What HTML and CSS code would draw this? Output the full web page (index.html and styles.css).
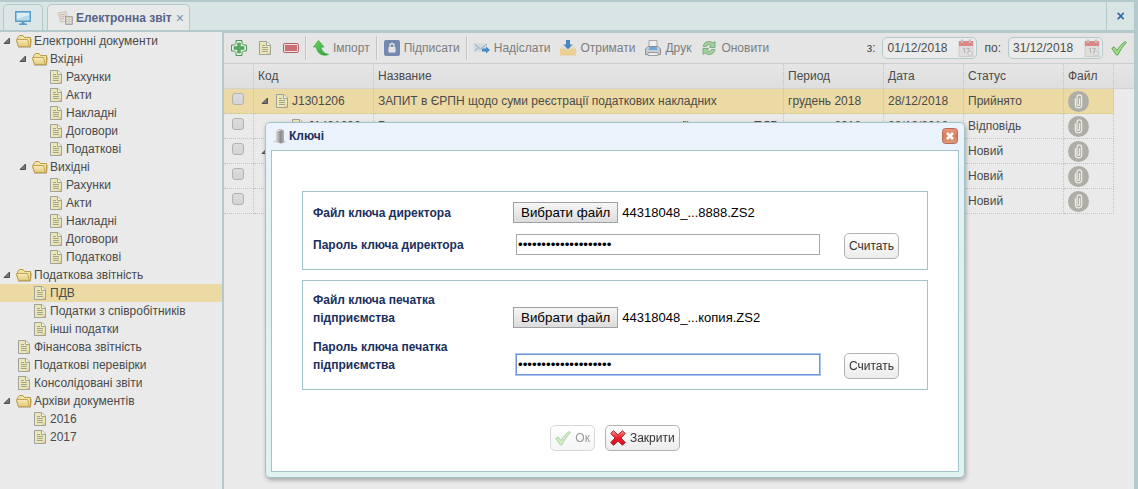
FILE: index.html
```
<!DOCTYPE html>
<html lang="uk">
<head>
    <meta charset="UTF-8">
    <meta name="viewport" content="width=device-width, initial-scale=1.0">
    <title>Електронна звіт</title>
    <link rel="stylesheet" href="styles.css">
</head>
<body>
    <!-- icon sprite -->
    <svg class="sprite">
        <defs>
            <linearGradient id="gFolder" x1="0" y1="0" x2="0" y2="1">
                <stop offset="0" stop-color="#f6eebc"/><stop offset="1" stop-color="#e2c878"/>
            </linearGradient>
            <linearGradient id="gRed" x1="0" y1="0" x2="0" y2="1">
                <stop offset="0" stop-color="#ff8f8f"/><stop offset="0.5" stop-color="#e81c24"/><stop offset="1" stop-color="#d80f18"/>
            </linearGradient>
            <linearGradient id="gClose" x1="0" y1="0" x2="0" y2="1">
                <stop offset="0" stop-color="#e59a80"/><stop offset="0.5" stop-color="#dd7a5c"/><stop offset="1" stop-color="#d3a27e"/>
            </linearGradient>
            <linearGradient id="gArrow" x1="0" y1="0" x2="1" y2="1">
                <stop offset="0" stop-color="#6fd45c"/><stop offset="1" stop-color="#27a03a"/>
            </linearGradient>
            <linearGradient id="gMetal" x1="0" y1="0" x2="1" y2="0">
                <stop offset="0" stop-color="#d8d8d8"/><stop offset="0.45" stop-color="#8c8c8c"/><stop offset="1" stop-color="#c9c9c9"/>
            </linearGradient>
        </defs>
        <symbol id="folder" viewBox="0 0 16 16">
            <path d="M2 14.500H14.500L15.500 6" fill="none" stroke="#c2bfae"/>
            <path d="M1.500 5L3.500 2.500H7L8.500 4.500H14.500V13.500H2.500L.5 7.500H1.500Z" fill="#efe4a8" stroke="#bd9a45"/>
            <path d="M.5 6.500H11.500L13.500 13.500H2.500Z" fill="url(#gFolder)" stroke="#c5a250"/>
        </symbol>
        <symbol id="doc" viewBox="0 0 16 16">
            <path d="M2.500 1.500H10L13.500 5V14.500H2.500Z" fill="#ebe8b4" stroke="#a0a09c"/>
            <path d="M9.500 1.500V5.500H13.500" fill="#f5f5e8" stroke="#a0a09c"/>
            <path d="M5 5.500H8M5 7.500H11M5 9.500H11M5 11.500H11" stroke="#a3a294"/>
            <path d="M10 14L13 14V11Z" fill="#e8c8a0"/>
        </symbol>
        <symbol id="toggle" viewBox="0 0 8 8">
            <path d="M6.500 1V6.500H1Z" fill="#777" stroke="#4d4d4d"/>
        </symbol>
        <symbol id="screen" viewBox="0 0 16 16">
            <path d="M.7 1.700H15.300V11.300H.7Z" fill="#b4dcea" stroke="#5a9cc8" stroke-width="1.400"/>
            <path d="M2 3H14V5L2 9Z" fill="#d8eef4"/>
            <path d="M6.500 12H9.500V13.500H12V15H4V13.500H6.500Z" fill="#5a9cc8"/>
        </symbol>
        <symbol id="report" viewBox="0 0 16 16">
            <path d="M1 3L9 1.500L11 10L4 12.500Z" fill="#e2deda" stroke="#cbc4bd"/>
            <path d="M3 5L8 4M3.500 7L8.500 6M4 9L7 8.500" stroke="#dcb8ac"/>
            <path d="M8.500 6.500H15.500V14.500H8.500Z" fill="#c9c6c0" stroke="#aaa9a4"/>
            <path d="M10 8.500H14M10 10.500H14M10 12.500H14" stroke="#eee" stroke-dasharray="1 .5"/>
        </symbol>
        <symbol id="plus" viewBox="0 0 16 16">
            <path d="M5 .5H11V3.500L12.500 5H15.500V11H12.500L11 12.500V15.500H5V12.500L3.500 11H.5V5H3.500L5 3.500Z" fill="#e8efe6" stroke="#4d9660"/>
            <path d="M6.500 3H9.500V6.500H13V9.500H9.500V13H6.500V9.500H3V6.500H6.500Z" fill="#55a860" stroke="#4aa156" stroke-width=".6"/>
        </symbol>
        <symbol id="minus" viewBox="0 0 16 16">
            <rect x=".5" y="3.500" width="15" height="9" rx="1.500" fill="#f0dede" stroke="#b06468"/>
            <rect x="2" y="5" width="12" height="6" fill="#c87072"/>
        </symbol>
        <symbol id="import" viewBox="0 0 16 16">
            <path d="M5.500 .5L11 7H8C8.500 11 11 13.500 15.500 14.500C10 16.500 4 14 3.500 7H.5Z" fill="url(#gArrow)" stroke="#43a54a" stroke-width=".8"/>
        </symbol>
        <symbol id="lock" viewBox="0 0 16 16">
            <rect width="16" height="16" rx="2" fill="#7389b0"/>
            <path d="M6 7V5.500A2 2 0 0 1 10 5.500V7" fill="none" stroke="#e4e4e4" stroke-width="1.300"/>
            <rect x="4.500" y="7" width="7" height="5.500" rx=".5" fill="#e4e4e4"/>
        </symbol>
        <symbol id="mail" viewBox="0 0 16 16">
            <path d="M0 3.500H13V11.500H0Z" fill="#d2dae0"/>
            <path d="M.5 4L6.500 9L13 4M.5 11L4.500 7.500" fill="none" stroke="#96a8b6"/>
            <path d="M8 8.500H12V6.500L16 10L12 13.500V11.500H8Z" fill="#4b86c4"/>
        </symbol>
        <symbol id="inbox" viewBox="0 0 16 16">
            <path d="M2 4H14L16 9V14.500Q16 15.500 15 15.500H1Q0 15.500 0 14.500V9Z" fill="#dfe0d8"/>
            <path d="M0 8.500H5Q8 12 11 8.500H16V14.500Q16 15.500 15 15.500H1Q0 15.500 0 14.500Z" fill="#ebcf94"/>
            <path d="M6 0H10V4.500H12.500L8 9.500L3.500 4.500H6Z" fill="#4b86c4"/>
        </symbol>
        <symbol id="printer" viewBox="0 0 16 16">
            <path d="M4 .5H12V8H4Z" fill="#f0f0f0" stroke="#a5a5a5"/>
            <path d="M3 6.500H13L15.500 9V14.500H.5V9Z" fill="#c9ccd0" stroke="#8c9096"/>
            <path d="M4.500 7H11.500L12.500 10H3.500Z" fill="#69a8e0"/>
            <path d="M3 12.500H13V15.500H3Z" fill="#ededed" stroke="#9a9da2"/>
        </symbol>
        <symbol id="refresh" viewBox="0 0 16 16">
            <path d="M2 6.500C3 1 9 .5 12 3L14 1.500V7.500H8.500L10 5.500C8 4 6 4.500 5.500 6.500Z" fill="#a4cf9e" stroke="#6ba572" stroke-width=".8"/>
            <path d="M14 9.500C13 15 7 15.500 4 13L2 14.500V8.500H7.500L6 10.500C8 12 10 11.500 10.500 9.500Z" fill="#a4cf9e" stroke="#6ba572" stroke-width=".8"/>
        </symbol>
        <symbol id="check" viewBox="0 0 16 16">
            <path d="M.8 8.500L3 6.800L6 10.500C8.500 6.500 11 3.500 14.500 1.500L15.500 2.500C12 6 9 10.500 6.800 15H5.500Z" fill="#a5dd84" stroke="#55a558"/>
        </symbol>
        <symbol id="cross" viewBox="0 0 16 16">
            <path d="M3.500 .7L8 4.800L12.500 .7L15.300 3.500L11 8L15.300 12.500L12.500 15.300L8 11.200L3.500 15.300L.7 12.500L5 8L.7 3.500Z" fill="url(#gRed)" stroke="#b02830" stroke-linejoin="round"/>
        </symbol>
        <symbol id="calendar" viewBox="0 0 16 18">
            <rect x="1" y="2.500" width="14" height="15" fill="#dfdddd" stroke="#cfcccc"/>
            <path d="M1 2H15V7H1Z" fill="#dc8686"/>
            <path d="M4 .5V4M12 .5V4" stroke="#c4bcbc" stroke-width="2.400"/>
            <path d="M5 10L6.500 9V14M8.500 9.500H11.500L9.500 14" fill="none" stroke="#b5b3b3"/>
            <circle cx="12" cy="14.500" r="2" fill="#ececec" stroke="#c6c4c4"/>
        </symbol>
        <symbol id="clip" viewBox="0 0 20 20">
            <circle cx="10" cy="10" r="10" fill="#aeada6"/>
            <path d="M7 7V13A3 3 0 0 0 13 13V6A2.200 2.200 0 0 0 8.600 6V12.500A1.200 1.200 0 0 0 11 12.500V7" fill="none" stroke="#ebebe8" stroke-width="1.200"/>
        </symbol>
        <symbol id="tower" viewBox="0 0 16 16">
            <path d="M0 14L4 11V15Z" fill="#d4d4d4"/>
            <path d="M3 2.500L7 1L11 2.500V13L13 14L8 15.500L3 14Z" fill="url(#gMetal)"/>
            <path d="M4 3L8 2" stroke="#eee"/>
        </symbol>
        <symbol id="close" viewBox="0 0 16 16">
            <rect x=".5" y=".5" width="15" height="15" rx="3" fill="url(#gClose)" stroke="#b5695c"/>
            <path d="M5 5L11 11M11 5L5 11" stroke="#fff" stroke-width="2.600"/>
        </symbol>
    </svg>

    <div class="app">
        <header class="tabbar">
            <button class="tab tab-home" aria-label="Робочий стіл"><svg class="icon"><use href="#screen"/></svg></button>
            <div class="tab tab-active">
                <svg class="icon"><use href="#report"/></svg>
                <span>Електронна звіт</span>
                <button class="tab-close" aria-label="Закрити вкладку">×</button>
            </div>
            <button class="close-all" aria-label="Закрити все">×</button>
        </header>

        <div class="workspace">
            <nav class="sidebar">
                <ul class="tree">
                    <li><a href="#" class="node"><svg class="toggle"><use href="#toggle"/></svg><svg class="icon"><use href="#folder"/></svg>Електронні документи</a>
                        <ul>
                            <li><a href="#" class="node"><svg class="toggle"><use href="#toggle"/></svg><svg class="icon"><use href="#folder"/></svg>Вхідні</a>
                                <ul>
                                    <li><a href="#" class="node leaf"><svg class="icon"><use href="#doc"/></svg>Рахунки</a></li>
                                    <li><a href="#" class="node leaf"><svg class="icon"><use href="#doc"/></svg>Акти</a></li>
                                    <li><a href="#" class="node leaf"><svg class="icon"><use href="#doc"/></svg>Накладні</a></li>
                                    <li><a href="#" class="node leaf"><svg class="icon"><use href="#doc"/></svg>Договори</a></li>
                                    <li><a href="#" class="node leaf"><svg class="icon"><use href="#doc"/></svg>Податкові</a></li>
                                </ul>
                            </li>
                            <li><a href="#" class="node"><svg class="toggle"><use href="#toggle"/></svg><svg class="icon"><use href="#folder"/></svg>Вихідні</a>
                                <ul>
                                    <li><a href="#" class="node leaf"><svg class="icon"><use href="#doc"/></svg>Рахунки</a></li>
                                    <li><a href="#" class="node leaf"><svg class="icon"><use href="#doc"/></svg>Акти</a></li>
                                    <li><a href="#" class="node leaf"><svg class="icon"><use href="#doc"/></svg>Накладні</a></li>
                                    <li><a href="#" class="node leaf"><svg class="icon"><use href="#doc"/></svg>Договори</a></li>
                                    <li><a href="#" class="node leaf"><svg class="icon"><use href="#doc"/></svg>Податкові</a></li>
                                </ul>
                            </li>
                        </ul>
                    </li>
                    <li><a href="#" class="node"><svg class="toggle"><use href="#toggle"/></svg><svg class="icon"><use href="#folder"/></svg>Податкова звітність</a>
                        <ul>
                            <li><a href="#" class="node leaf selected"><svg class="icon"><use href="#doc"/></svg>ПДВ</a></li>
                            <li><a href="#" class="node leaf"><svg class="icon"><use href="#doc"/></svg>Податки з співробітників</a></li>
                            <li><a href="#" class="node leaf"><svg class="icon"><use href="#doc"/></svg>інші податки</a></li>
                        </ul>
                    </li>
                    <li><a href="#" class="node leaf"><svg class="icon"><use href="#doc"/></svg>Фінансова звітність</a></li>
                    <li><a href="#" class="node leaf"><svg class="icon"><use href="#doc"/></svg>Податкові перевірки</a></li>
                    <li><a href="#" class="node leaf"><svg class="icon"><use href="#doc"/></svg>Консолідовані звіти</a></li>
                    <li><a href="#" class="node"><svg class="toggle"><use href="#toggle"/></svg><svg class="icon"><use href="#folder"/></svg>Архіви документів</a>
                        <ul>
                            <li><a href="#" class="node leaf"><svg class="icon"><use href="#doc"/></svg>2016</a></li>
                            <li><a href="#" class="node leaf"><svg class="icon"><use href="#doc"/></svg>2017</a></li>
                        </ul>
                    </li>
                </ul>
            </nav>

            <main class="content">
                <div class="toolbar">
                    <button class="tool" aria-label="Додати"><svg class="icon"><use href="#plus"/></svg></button>
                    <button class="tool" aria-label="Редагувати"><svg class="icon"><use href="#doc"/></svg></button>
                    <button class="tool" aria-label="Видалити"><svg class="icon"><use href="#minus"/></svg></button>
                    <span class="sep"></span>
                    <button class="tool"><svg class="icon"><use href="#import"/></svg>Імпорт</button>
                    <span class="sep"></span>
                    <button class="tool"><svg class="icon"><use href="#lock"/></svg>Підписати</button>
                    <span class="sep"></span>
                    <button class="tool"><svg class="icon"><use href="#mail"/></svg>Надіслати</button>
                    <button class="tool"><svg class="icon"><use href="#inbox"/></svg>Отримати</button>
                    <button class="tool"><svg class="icon"><use href="#printer"/></svg>Друк</button>
                    <button class="tool"><svg class="icon"><use href="#refresh"/></svg>Оновити</button>
                    <div class="period">
                        <label for="dateFrom">з:</label>
                        <span class="datebox"><input type="text" id="dateFrom" value="01/12/2018"><svg class="cal"><use href="#calendar"/></svg></span>
                        <label for="dateTo">по:</label>
                        <span class="datebox"><input type="text" id="dateTo" value="31/12/2018"><svg class="cal"><use href="#calendar"/></svg></span>
                        <button class="tool" aria-label="Застосувати"><svg class="icon"><use href="#check"/></svg></button>
                    </div>
                </div>

                <table class="grid">
                    <colgroup>
                        <col class="c-check"><col class="c-code"><col class="c-name"><col class="c-period">
                        <col class="c-date"><col class="c-status"><col class="c-file"><col>
                    </colgroup>
                    <thead>
                        <tr><th></th><th>Код</th><th>Название</th><th>Период</th><th>Дата</th><th>Статус</th><th>Файл</th><th></th></tr>
                    </thead>
                    <tbody>
                        <tr class="selected">
                            <td><input type="checkbox" aria-label="Вибрати рядок 1"></td>
                            <td><span class="code"><svg class="toggle"><use href="#toggle"/></svg><svg class="icon"><use href="#doc"/></svg>J1301206</span></td>
                            <td>ЗАПИТ в ЄРПН щодо суми реєстрації податкових накладних</td>
                            <td>грудень 2018</td><td>28/12/2018</td><td>Прийнято</td>
                            <td><svg class="clip"><use href="#clip"/></svg></td><td></td>
                        </tr>
                        <tr>
                            <td><input type="checkbox" aria-label="Вибрати рядок 2"></td>
                            <td><span class="code child"><svg class="icon"><use href="#doc"/></svg>J1401206</span></td>
                            <td>Розрахунок суми податку на яку платник має реєстрації накладних ПДВ</td>
                            <td>грудень 2018</td><td>28/12/2018</td><td>Відповідь</td>
                            <td><svg class="clip"><use href="#clip"/></svg></td><td></td>
                        </tr>
                        <tr>
                            <td><input type="checkbox" aria-label="Вибрати рядок 3"></td>
                            <td><span class="code"><svg class="toggle"><use href="#toggle"/></svg></span></td>
                            <td></td><td></td><td></td><td>Новий</td>
                            <td><svg class="clip"><use href="#clip"/></svg></td><td></td>
                        </tr>
                        <tr>
                            <td><input type="checkbox" aria-label="Вибрати рядок 4"></td>
                            <td></td><td></td><td></td><td></td><td>Новий</td>
                            <td><svg class="clip"><use href="#clip"/></svg></td><td></td>
                        </tr>
                        <tr>
                            <td><input type="checkbox" aria-label="Вибрати рядок 5"></td>
                            <td></td><td></td><td></td><td></td><td>Новий</td>
                            <td><svg class="clip"><use href="#clip"/></svg></td><td></td>
                        </tr>
                    </tbody>
                </table>
            </main>
        </div>
    </div>

    <div class="window" role="dialog" aria-labelledby="windowTitle">
        <div class="window-header">
            <svg class="icon"><use href="#tower"/></svg>
            <h2 id="windowTitle">Ключі</h2>
            <button class="window-close" aria-label="Закрити вікно"><svg class="icon"><use href="#close"/></svg></button>
        </div>
        <form class="window-body" onsubmit="return false">
            <div class="group">
                <label class="file-label" for="directorFile">Файл ключа директора</label>
                <div class="file">
                    <button type="button" id="directorFile">Вибрати файл</button>
                    <span>44318048_...8888.ZS2</span>
                </div>
                <label class="pass-label" for="directorPass">Пароль ключа директора</label>
                <input type="password" class="pass" id="directorPass" value="12345678901234567890">
                <button type="button" class="btn">Считать</button>
            </div>
            <div class="group">
                <label class="file-label" for="stampFile">Файл ключа печатка підприємства</label>
                <div class="file">
                    <button type="button" id="stampFile">Вибрати файл</button>
                    <span>44318048_...копия.ZS2</span>
                </div>
                <label class="pass-label" for="stampPass">Пароль ключа печатка підприємства</label>
                <input type="password" class="pass" id="stampPass" value="12345678901234567890">
                <button type="button" class="btn">Считать</button>
            </div>
            <div class="actions">
                <button type="button" class="btn" disabled><svg class="icon"><use href="#check"/></svg>Ок</button>
                <button type="button" class="btn"><svg class="icon"><use href="#cross"/></svg>Закрити</button>
            </div>
        </form>
    </div>

    <script>
        // курсор в кінець пароля печатки
        const stampPass = document.getElementById("stampPass");
        stampPass.focus();
        stampPass.setSelectionRange(stampPass.value.length, stampPass.value.length);
    </script>
</body>
</html>
```
FILE: styles.css
```
* {
    box-sizing: border-box;
}
body {
    margin: 0;
    font-family: "Liberation Sans", Arial, sans-serif;
    font-size: 12px;
    color: #4b4b4b;
    background-color: #eaeaea;
}
button, input {
    font-family: "Liberation Sans", Arial, sans-serif;
}
.sprite {
    position: absolute;
    width: 0;
    height: 0;
}
.icon {
    width: 16px;
    height: 16px;
    flex: none;
}
.app {
    display: flex;
    flex-direction: column;
    height: 100vh;
    overflow: hidden;
    border-right: 4px solid #b4c9cb;
}

/* tabs */
.tabbar {
    display: flex;
    align-items: flex-end;
    gap: 4px;
    height: 32px;
    flex: none;
    padding-left: 3px;
    background-color: #d8e5e4;
    border-top: 2px solid #b4c9cb;
    border-bottom: 2px solid #b4c9cb;
}
.tab {
    display: flex;
    align-items: center;
    height: 26px;
    padding: 0 9px;
    border: 1px solid #b4c9cb;
    border-bottom: none;
    border-radius: 5px 5px 0 0;
    background-color: #dde6e6;
}
.tab-home {
    width: 40px;
    justify-content: center;
}
.tab-active {
    background-color: #e8eaea;
    color: #566489;
    font-weight: bold;
}
.tab-active span {
    margin-left: 3px;
}
.tab-close, .close-all {
    border: none;
    background: none;
    padding: 0;
    color: #6f90b4;
    font-size: 14px;
}
.tab-close {
    margin-left: 4px;
    margin-right: -4px;
}
.close-all {
    align-self: stretch;
    width: 28px;
    margin-left: auto;
    border-left: 1px solid #b4c9cb;
    color: #2f68a8;
    font-weight: bold;
}

.workspace {
    display: flex;
    flex: 1;
    min-height: 0;
}

/* tree */
.sidebar {
    width: 224px;
    flex: none;
    border-right: 2px solid #b4c9cb;
}
.tree, .tree ul {
    list-style: none;
    margin: 0;
    padding: 0;
}
.node {
    display: flex;
    align-items: center;
    height: 18px;
    color: #4b4b4b;
    text-decoration: none;
    white-space: nowrap;
}
.node .icon {
    margin-right: 2px;
}
.toggle {
    width: 8px;
    height: 8px;
    margin: 0 5px 0 3px;
    flex: none;
}
.leaf {
    padding-left: 16px;
}
.tree ul .node {
    padding-left: 16px;
}
.tree ul .leaf {
    padding-left: 32px;
}
.tree ul ul .leaf {
    padding-left: 48px;
}
.selected {
    background-color: #ebdaa4;
}

/* toolbar */
.content {
    flex: 1;
    min-width: 0;
    border-top: 1px solid #b4c9cb;
}
.toolbar {
    display: flex;
    align-items: center;
    gap: 2px;
    height: 30px;
    padding: 0 3px;
    background-color: #e5e5e5;
}
.tool {
    display: flex;
    align-items: center;
    gap: 4px;
    height: 24px;
    padding: 0 4px;
    border: none;
    background: none;
    font-size: 12px;
    color: #7d7d7d;
    white-space: nowrap;
}
.sep {
    width: 2px;
    height: 24px;
    border-left: 1px solid #c4c4c4;
    border-right: 1px solid #eee;
}
.period {
    display: flex;
    align-items: center;
    margin-left: auto;
}
.period label {
    margin: 0 7px;
}
.datebox {
    display: flex;
    align-items: center;
    width: 95px;
    height: 22px;
    padding: 0 2px 0 4px;
    border: 1px solid #b4c9cb;
    border-radius: 5px;
    background-color: #ebebeb;
}
.datebox input {
    flex: 1;
    min-width: 0;
    padding: 0;
    border: none;
    background: none;
    font-size: 12px;
    color: #4b4b4b;
}
.cal {
    width: 16px;
    height: 18px;
    flex: none;
}
.period .tool {
    margin-left: 4px;
}

/* documents */
.grid {
    width: 100%;
    table-layout: fixed;
    border-collapse: separate;
    border-spacing: 0;
}
.c-check {
    width: 30px;
}
.c-code {
    width: 120px;
}
.c-name {
    width: 410px;
}
.c-period, .c-status {
    width: 100px;
}
.c-date {
    width: 80px;
}
.c-file {
    width: 50px;
}
.grid th, .grid td {
    height: 25px;
    padding: 0 4px;
    text-align: left;
    font-weight: normal;
    white-space: nowrap;
    border-right: 1px dotted #c2c2c2;
}
.grid th {
    height: 26px;
    background: linear-gradient(#e6e6e6, #dedede);
    border-top: 1px solid #cdcdcd;
    border-bottom: 1px solid #d2d2d2;
}
.grid td {
    border-bottom: 1px dotted #c2c2c2;
}
.grid th:last-child {
    border-right: none;
}
.grid td:last-child {
    border: none;
    background-color: #eaeaea;
}
.grid td:first-child {
    padding: 0 8px;
}
.grid input {
    appearance: none;
    display: block;
    width: 12px;
    height: 12px;
    margin: 0 0 4px;
    border: 1px solid #b2b2b2;
    border-radius: 3px;
    background: linear-gradient(#dcdcdc, #d4d4d4);
}
.code {
    display: flex;
    align-items: center;
}
.code .icon {
    margin-right: 2px;
}
.code.child {
    padding-left: 32px;
}
.clip {
    display: block;
    width: 21px;
    height: 21px;
}

/* key window */
.window {
    position: absolute;
    left: 265px;
    top: 122px;
    width: 700px;
    padding: 0 5px 5px;
    border: 1px solid #a3c3c8;
    border-radius: 5px;
    background: linear-gradient(#ecf3fe, #def1ef 35%, #e0f2f1);
    box-shadow: 1px 2px 4px rgba(0, 0, 0, 0.3);
}
.window-header {
    display: flex;
    align-items: center;
    height: 27px;
    padding: 0 1px 1px 2px;
}
.window-header h2 {
    margin: 0;
    font-size: 12px;
    color: #1a2f60;
}
.window-close {
    display: flex;
    margin-left: auto;
    padding: 0;
    border: none;
    background: none;
}
.window-body {
    padding: 40px 30px 20px;
    border: 1px solid #a3c3c8;
    background-color: #fff;
}
.group {
    display: grid;
    grid-template-columns: 200px 1fr auto;
    row-gap: 10px;
    align-items: end;
    margin-bottom: 10px;
    padding: 10px 28px 10px 10px;
    border: 1px solid #a3c3c8;
}
.group label {
    max-width: 160px;
    line-height: 18px;
    font-weight: bold;
    color: #1a2f60;
}
.file-label {
    margin-bottom: 1px;
}
.pass-label {
    margin-bottom: 5px;
}
.file {
    grid-column: 2 / 4;
    display: flex;
    align-items: center;
    gap: 4px;
    height: 21px;
    font-size: 13px;
    color: #000;
}
.file button {
    height: 21px;
    padding: 0 7px;
    border: 1px solid #a0a0a0;
    background: linear-gradient(#f6f6f6, #dcdcdc);
    color: #000;
}
.pass {
    height: 21px;
    margin: 0 24px 4px 3px;
    padding: 1px;
    border: 1px solid #a9a9a9;
    color: #000;
}
.pass:focus {
    outline: none;
    border-color: #6f96dc;
    box-shadow: 0 0 0 1px #a9c3f2;
}
.btn {
    display: flex;
    align-items: center;
    gap: 4px;
    height: 26px;
    padding: 0 4px;
    border: 1px solid #b2b2b2;
    border-radius: 5px;
    background: linear-gradient(#fff, #ececec);
    font-size: 12px;
    color: #333;
}
.btn:disabled {
    opacity: 0.5;
}
.actions {
    display: flex;
    justify-content: center;
    gap: 10px;
    padding-top: 25px;
}
```
